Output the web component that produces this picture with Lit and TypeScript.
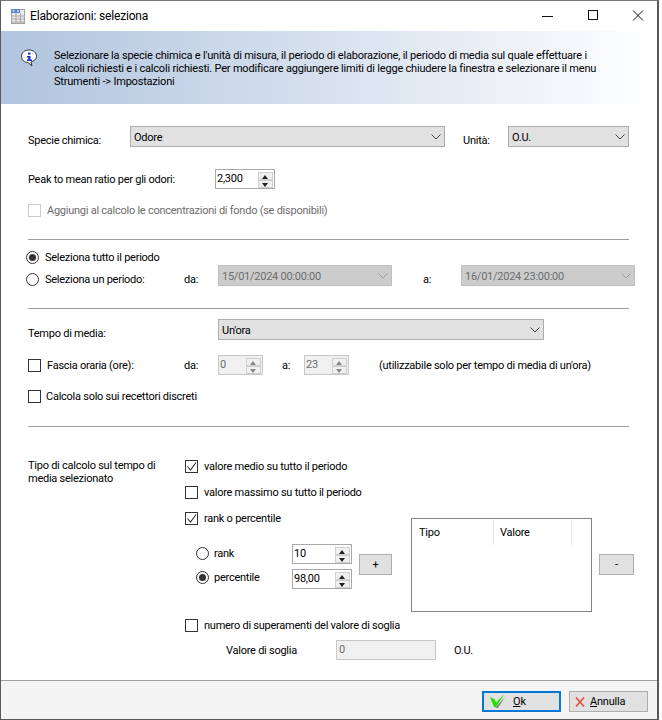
import { LitElement, html, css, svg } from "lit";
import { customElement } from "lit/decorators.js";

const chevron = html`<svg class="chev" width="10" height="6" viewBox="0 0 10 6"><path d="M.5.5 5 5 9.500.5" fill="none" stroke="currentColor"/></svg>`;
const tick = svg`<path d="M2.500 6.500 5.500 10 11 2.500" fill="none" stroke="#333" stroke-width="1.100"/>`;

function select(text: string, disabled = false) {
  return html`<div class="select ${disabled ? "off" : ""}"><span>${text}</span>${chevron}</div>`;
}
function spin(text: string, disabled = false) {
  return html`<div class="spin ${disabled ? "off" : ""}"><span>${text}</span><div class="arrows"><i class="up"></i><i class="down"></i></div></div>`;
}
function check(on = false, disabled = false) {
  return html`<span class="check ${disabled ? "off" : ""}">${on ? html`<svg width="13" height="13" viewBox="0 0 13 13">${tick}</svg>` : ""}</span>`;
}
function radio(on = false, cls = "") {
  return html`<span class="radio ${cls}">${on ? html`<i></i>` : ""}</span>`;
}

@customElement("app-root")
export class AppRoot extends LitElement {
  static styles = css`
    :host { display: block; width: 662px; height: 720px; overflow: hidden; background: #fff;
      font: 11px/13px Roboto, Arial, sans-serif; letter-spacing: -0.2px; color: #000; }
    * { box-sizing: border-box; }
    .window { width: 659px; height: 720px; display: flex; flex-direction: column; background: #fff;
      border: 1px solid #5a5a5a; border-top-color: #777; border-right-width: 2px; border-left-width: 1px; }
    .title { height: 30px; flex: none; display: flex; align-items: center; padding-left: 9px; }
    .title svg { flex: none; }
    .title .name { margin-left: 4px; font: 12px/16px Roboto, sans-serif; letter-spacing: -0.17px; }
    .caps { margin-left: auto; display: flex; }
    .caps svg { display: block; }
    .banner { height: 73px; flex: none; padding: 18px 0 0 20px; display: flex;
      background: linear-gradient(90deg, #b0c4de, #fff); }
    .banner svg { flex: none; }
    .banner p { margin: 0 0 0 17px; white-space: nowrap; }
    .body { flex: 1; display: flex; flex-direction: column; padding-left: 27px; letter-spacing: -0.25px; }
    .grid { display: grid; align-items: center; }
    .low { margin-top: 8px; }
    .g-specie { margin-top: 22px; height: 21px; grid-template-columns: 102px 315px 18px 45px 121px; }
    .g-peak { margin-top: 22px; height: 20px; grid-template-columns: 187px 60px; }
    .g-fondo { margin-top: 15px; height: 13px; grid-template-columns: 19px 1fr; color: #6d6d6d; }
    hr { margin: 22px 0 0; width: 601px; height: 2px; border: 0; border-top: 1px solid #a0a0a0; border-bottom: 1px solid #fff; flex: none; }
    .g-r1 { margin: 10px 0 0 -2px; height: 13px; grid-template-columns: 19px 1fr; }
    .g-r2 { margin: 1px 0 0 -2px; height: 21px; grid-template-columns: 19px 139px 34px 174px 31px 38px 174px; }
    .g-tempo { margin-top: 9px; height: 21px; grid-template-columns: 190px 326px; }
    .g-fascia { margin-top: 15px; height: 20px; grid-template-columns: 19px 137px 34px 45px 19px 22px 45px 30px 1fr; }
    .g-calcola { margin-top: 15px; height: 13px; grid-template-columns: 18px 1fr; }
    .hr3 { margin-top: 23px; }
    .calc { margin-top: 31px; display: grid; grid-template-columns: 157px 1fr; }
    .calc .lab { width: 150px; }
    .ck { display: grid; grid-template-columns: 19px 1fr; height: 13px; align-items: center; }
    .ck > span + span { margin-top: 1px; }
    .ck + .ck { margin-top: 13px; }
    .mid { display: flex; margin-top: 13px; height: 101px; }
    .mid-left { width: 226px; flex: none; }
    .ranks { margin: 20px 0 0 11px; display: grid; grid-template-columns: 18px 78px 60px 7px 33px; grid-template-rows: 20px 20px; row-gap: 5px; align-items: center; }
    .nudge1 { margin-top: -1px; }
    .nudge3 { margin-top: -3px; }
    .plus { grid-column: 5; grid-row: 1 / span 2; align-self: start; margin-top: 10px; }
    .list { width: 181px; height: 94px; margin-top: 7px; border: 1px solid #82828a; flex: none; }
    .list .head { display: grid; grid-template-columns: 82px 78px; height: 25px; margin-top: 1px; }
    .list .head span { border-right: 1px solid #e5e5e5; padding: 6px 0 0 7px; }
    .list .head span + span { padding-left: 6px; }
    .minus { margin: 36px 0 0 7px; }
    .btn { width: 35px; height: 21px; background: #e1e1e1; border: 1px solid #adadad; display: flex; align-items: center; justify-content: center; flex: none; }
    .btn.plus { width: 33px; }
    .minus { margin: 43px 0 0 7px; }
    .g-numero { margin-top: 6px; }
    .g-soglia { margin: 9px 0 0 41px; height: 20px; grid-template-columns: 110px 100px 18px auto; }
    .foot { height: 39px; flex: none; background: #f4f4f4; border-top: 1px solid #a0a0a0; display: flex; justify-content: flex-end; gap: 8px; padding: 10px 9px 0 0; }
    .fbtn { width: 79px; height: 21px; background: #e1e1e1; border: 1px solid #adadad; display: flex; align-items: center; }
    .fbtn.def { border: 2px solid #0078d7; }
    .fbtn svg { flex: none; }
    .ok-txt { margin-left: 5px; }
    .an-txt { margin-left: -2px; }
    .select { height: 21px; background: #e1e1e1; border: 1px solid #adadad; display: flex; padding: 3px 0 0 3px; }
    .select .chev { margin: 4px 3px 0 auto; color: #444; }
    .select span { margin-top: 1px; }
    .select.off { background: #ccc; border-color: #bfbfbf; color: #6d6d6d; }
    .select.off .chev { color: #9a9a9a; }
    .spin { height: 20px; border: 1px solid #a9a9a9; display: flex; padding: 2px 0 0 1px; background: #fff; }
    .spin .arrows { margin: 0 1px 0 auto; width: 15px; display: flex; flex-direction: column; height: 16px; }
    .spin i { flex: 1; background: #f0f0f0; border: 1px solid #cfcfcf; position: relative; display: block; }
    .spin i::after { content: ""; position: absolute; left: 3px; border-left: 3.500px solid transparent; border-right: 3.500px solid transparent; }
    .spin i.up::after { top: 2px; border-bottom: 4px solid #222; }
    .spin i.down::after { top: 2px; border-top: 4px solid #222; }
    .spin.off { background: #f0f0f0; border-color: #c8c8c8; color: #6d6d6d; }
    .spin.off i::after { border-top-color: #888; border-bottom-color: #888; }
    .check { width: 13px; height: 13px; border: 1px solid #333; display: block; background: #fff; position: relative; }
    .check svg { position: absolute; left: -1px; top: -1px; }
    .check.off { border-color: #ccc; }
    .radio { width: 13px; height: 13px; border: 1px solid #333; border-radius: 50%; display: flex; align-items: center; justify-content: center; background: #fff; }
    .radio i { width: 7px; height: 7px; border-radius: 50%; background: #333; display: block; }
    .input { height: 20px; background: #f0f0f0; border: 1px solid #c8c8c8; color: #6d6d6d; padding: 2px 0 0 2px; }
  `;

  render() {
    return html`<div class="window">
      <div class="title">
        <svg width="16" height="16" viewBox="0 0 16 16">
          <rect x="1.500" y="1.500" width="13" height="14" fill="#e8e8e8" stroke="#a0a0a0"/>
          <rect x="1" y="1" width="9" height="4" fill="#5f86c8"/>
          <path d="M6 5v11M10.500 5v11M1 8h14M1 11h14M1 14h14" stroke="#a8a8a8"/>
          <path d="M2.500 3h2M7 3h2" stroke="#fff"/>
        </svg>
        <span class="name">Elaborazioni: seleziona</span>
        <div class="caps">
          <svg width="115" height="30" viewBox="0 0 115 30">
            <path d="M0 15.500h11" stroke="#111"/>
            <rect x="46.500" y="9.500" width="9" height="9" fill="none" stroke="#111"/>
            <path d="M91 9.500l10 10M101 9.500l-10 10" stroke="#111"/>
          </svg>
        </div>
      </div>
      <div class="banner">
        <svg width="16" height="18" viewBox="0 0 16 18">
          <path d="M8 1C3.500 1 .5 3.800.5 7.500c0 3.500 2.800 6 6.500 6l4 3.500-1-4c3-1 5.500-3 5.500-5.500C15.500 3.800 12.500 1 8 1z" fill="#fff" stroke="#333"/>
          <rect x="7" y="3.500" width="2.500" height="2" fill="#1c2fd0"/>
          <path d="M6 7h3.500v3.500H11V12H6v-1.500h1.200V8.500H6z" fill="#1c2fd0"/>
        </svg>
        <p>Selezionare la specie chimica e l'unità di misura, il periodo di elaborazione, il periodo di media sul quale effettuare i<br />calcoli richiesti e i calcoli richiesti. Per modificare aggiungere limiti di legge chiudere la finestra e selezionare il menu<br />Strumenti -&gt; Impostazioni</p>
      </div>
      <div class="body">
        <div class="grid g-specie">
          <span class="low">Specie chimica:</span>${select("Odore")}<span></span><span class="low">Unità:</span>${select("O.U.")}
        </div>
        <div class="grid g-peak"><span>Peak to mean ratio per gli odori:</span>${spin("2,300")}</div>
        <div class="grid g-fondo">${check(false, true)}<span>Aggiungi al calcolo le concentrazioni di fondo (se disponibili)</span></div>
        <hr />
        <div class="grid g-r1">${radio(true)}<span>Seleziona tutto il periodo</span></div>
        <div class="grid g-r2">
          ${radio(false, "low")}<span class="low">Seleziona un periodo:</span><span class="low">da:</span>${select("15/01/2024 00:00:00", true)}<span></span><span class="low">a:</span>${select("16/01/2024 23:00:00", true)}
        </div>
        <hr />
        <div class="grid g-tempo"><span class="low">Tempo di media:</span>${select("Un'ora")}</div>
        <div class="grid g-fascia">
          ${check()}<span>Fascia oraria (ore):</span><span>da:</span>${spin("0", true)}<span></span><span>a:</span>${spin("23", true)}<span></span><span>(utilizzabile solo per tempo di media di un'ora)</span>
        </div>
        <div class="grid g-calcola">${check()}<span>Calcola solo sui recettori discreti</span></div>
        <hr class="hr3" />
        <div class="calc">
          <div class="lab">Tipo di calcolo sul tempo di media selezionato</div>
          <div>
            <div class="ck">${check(true)}<span>valore medio su tutto il periodo</span></div>
            <div class="ck">${check()}<span>valore massimo su tutto il periodo</span></div>
            <div class="mid">
              <div class="mid-left">
                <div class="ck">${check(true)}<span>rank o percentile</span></div>
                <div class="ranks">
                  ${radio(false, "nudge1")}<span class="nudge1">rank</span>${spin("10")}<span></span>
                  <div class="btn plus">+</div>
                  ${radio(true, "nudge3")}<span class="nudge3">percentile</span>${spin("98,00")}
                </div>
              </div>
              <div class="list"><div class="head"><span>Tipo</span><span>Valore</span></div></div>
              <div class="btn minus">-</div>
            </div>
            <div class="ck g-numero">${check()}<span>numero di superamenti del valore di soglia</span></div>
            <div class="grid g-soglia"><span>Valore di soglia</span><div class="input">0</div><span></span><span>O.U.</span></div>
          </div>
        </div>
      </div>
      <div class="foot">
        <div class="fbtn def">
          <svg width="24" height="17" viewBox="0 0 24 17"><path d="M12 13.500 21 4l-7 11h-2z" fill="#8a8a8a"/><path d="M6 4l5 2.500 1 3L20 1.500 11.500 14.500 10 14z" fill="#22e000"/></svg>
          <span class="ok-txt"><u>O</u>k</span>
        </div>
        <div class="fbtn">
          <svg width="22" height="14" viewBox="0 0 22 14"><path d="M6 2.500l8 9M14 2.500l-8 9" stroke="#e84a3a" stroke-width="1.600"/></svg>
          <span class="an-txt"><u>A</u>nnulla</span>
        </div>
      </div>
    </div>`;
  }
}
